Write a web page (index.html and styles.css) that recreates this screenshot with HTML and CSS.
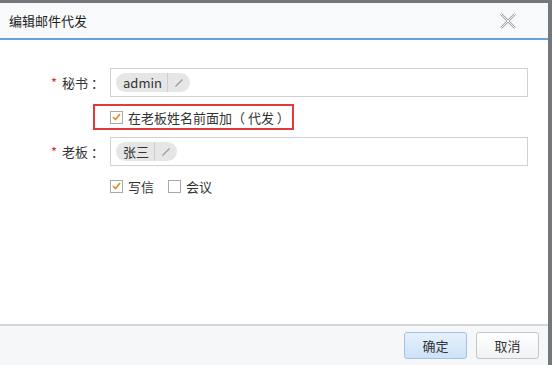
FILE: index.html
```html
<!DOCTYPE html>
<html>
<head>
<meta charset="utf-8">
<link rel="stylesheet" href="styles.css">
</head>
<body>
<div class="dialog">
  <div class="titlebar">
    <span class="title">编辑邮件代发</span>
    <svg class="close" width="18" height="16" viewBox="0 0 18 16">
      <path d="M2 1 L16 15 M16 1 L2 15" stroke="#a3a3a3" stroke-width="2.4" fill="none"/>
      <path d="M2 1 L16 15 M16 1 L2 15" stroke="#fff" stroke-width="0.9" fill="none"/>
    </svg>
  </div>
  <div class="body">
    <div class="row">
      <label class="label"><span class="req">*</span>秘书<span class="colon">：</span></label>
      <div class="field">
        <span class="tag">admin<span class="tag-edit"><svg width="10" height="10" viewBox="0 0 10 10"><path d="M2 8 L8.5 1.5" stroke="#9a9a9a" stroke-width="1.3"/><path d="M1 9 L2.5 8.5 L1.5 7.5 Z" fill="#9a9a9a"/></svg></span></span>
      </div>
    </div>
    <div class="checkrow">
      <div class="highlight">
        <span class="cb checked"><svg width="9" height="8" viewBox="0 0 9 8"><path d="M1 4 L3.5 6.5 L8 1" stroke="#e08a1a" stroke-width="1.6" fill="none"/></svg></span>
        <span>在老板姓名前面加（ 代发 ）</span>
      </div>
    </div>
    <div class="row">
      <label class="label"><span class="req">*</span>老板<span class="colon">：</span></label>
      <div class="field">
        <span class="tag">张三<span class="tag-edit"><svg width="10" height="10" viewBox="0 0 10 10"><path d="M2 8 L8.5 1.5" stroke="#9a9a9a" stroke-width="1.3"/><path d="M1 9 L2.5 8.5 L1.5 7.5 Z" fill="#9a9a9a"/></svg></span></span>
      </div>
    </div>
    <div class="checkrow opts">
      <span class="opt"><span class="cb checked"><svg width="9" height="8" viewBox="0 0 9 8"><path d="M1 4 L3.5 6.5 L8 1" stroke="#e08a1a" stroke-width="1.6" fill="none"/></svg></span>写信</span>
      <span class="opt"><span class="cb"></span>会议</span>
    </div>
  </div>
  <div class="footer">
    <button class="btn primary">确定</button>
    <button class="btn">取消</button>
  </div>
</div>
</body>
</html>
```
FILE: styles.css
```css
html, body {
  margin: 0;
  padding: 0;
}
body {
  background: #74787c;
  width: 552px;
  height: 365px;
  overflow: hidden;
  font-family: "Microsoft YaHei", "Noto Sans CJK SC", sans-serif;
  font-size: 13px;
  color: #333;
}
.dialog {
  margin-top: 3px;
  width: 548px;
  height: 362px;
  background: #fff;
  display: flex;
  flex-direction: column;
}
.titlebar {
  height: 35px;
  background: #f8f9fb;
  border-bottom: 2px solid #6f9de3;
  display: flex;
  align-items: center;
  justify-content: space-between;
  padding: 0 31px 0 9px;
  box-sizing: content-box;
}
.title {
  font-size: 13px;
  color: #222;
}
.close {
  display: block;
}
.body {
  flex: 1;
  padding-top: 28px;
}
.row {
  display: flex;
  align-items: center;
  height: 29px;
}
.label {
  width: 110px;
  padding-right: 6px;
  box-sizing: border-box;
  text-align: right;
  color: #333;
}
.colon {
  display: inline-block;
  margin-left: 3px;
}
.req {
  color: #d9322e;
  margin-right: 5px;
}
.field {
  width: 418px;
  height: 29px;
  box-sizing: border-box;
  border: 1px solid #cfd1d4;
  display: flex;
  align-items: center;
  padding-left: 5px;
}
.tag {
  display: inline-flex;
  align-items: center;
  height: 19px;
  border-radius: 10px;
  background: #e6e6e6;
  padding-left: 7px;
  color: #333;
  font-size: 13px;
}
.tag-edit {
  display: inline-flex;
  align-items: center;
  justify-content: center;
  width: 22px;
  height: 19px;
  margin-left: 5px;
  border-left: 1px solid #cfcfcf;
}
.checkrow {
  display: flex;
  align-items: center;
  padding-left: 93px;
  height: 40px;
}
.highlight {
  display: flex;
  align-items: center;
  width: 201px;
  height: 26px;
  box-sizing: border-box;
  border: 2px solid #e23a3a;
  padding-left: 15px;
}
.cb {
  display: inline-flex;
  align-items: center;
  justify-content: center;
  width: 13px;
  height: 13px;
  box-sizing: border-box;
  border: 1px solid #a9a9a9;
  background: #fff;
  margin-right: 5px;
}
.opts {
  padding-left: 110px;
  height: 40px;
}
.opt {
  display: inline-flex;
  align-items: center;
  margin-right: 14px;
}
.footer {
  height: 39px;
  background: #f6f7f9;
  border-top: 2px solid #d3d5d8;
  display: flex;
  align-items: center;
  justify-content: flex-end;
  gap: 9px;
  padding-right: 9px;
}
.btn {
  width: 63px;
  height: 27px;
  border: 1px solid #c3c6ca;
  border-radius: 3px;
  background: linear-gradient(#ffffff, #f1f2f4);
  font-family: inherit;
  font-size: 13px;
  color: #333;
  padding: 0;
}
.btn.primary {
  background: linear-gradient(#e6f1fc, #cde2f8);
  border-color: #a3c2e4;
}
```
